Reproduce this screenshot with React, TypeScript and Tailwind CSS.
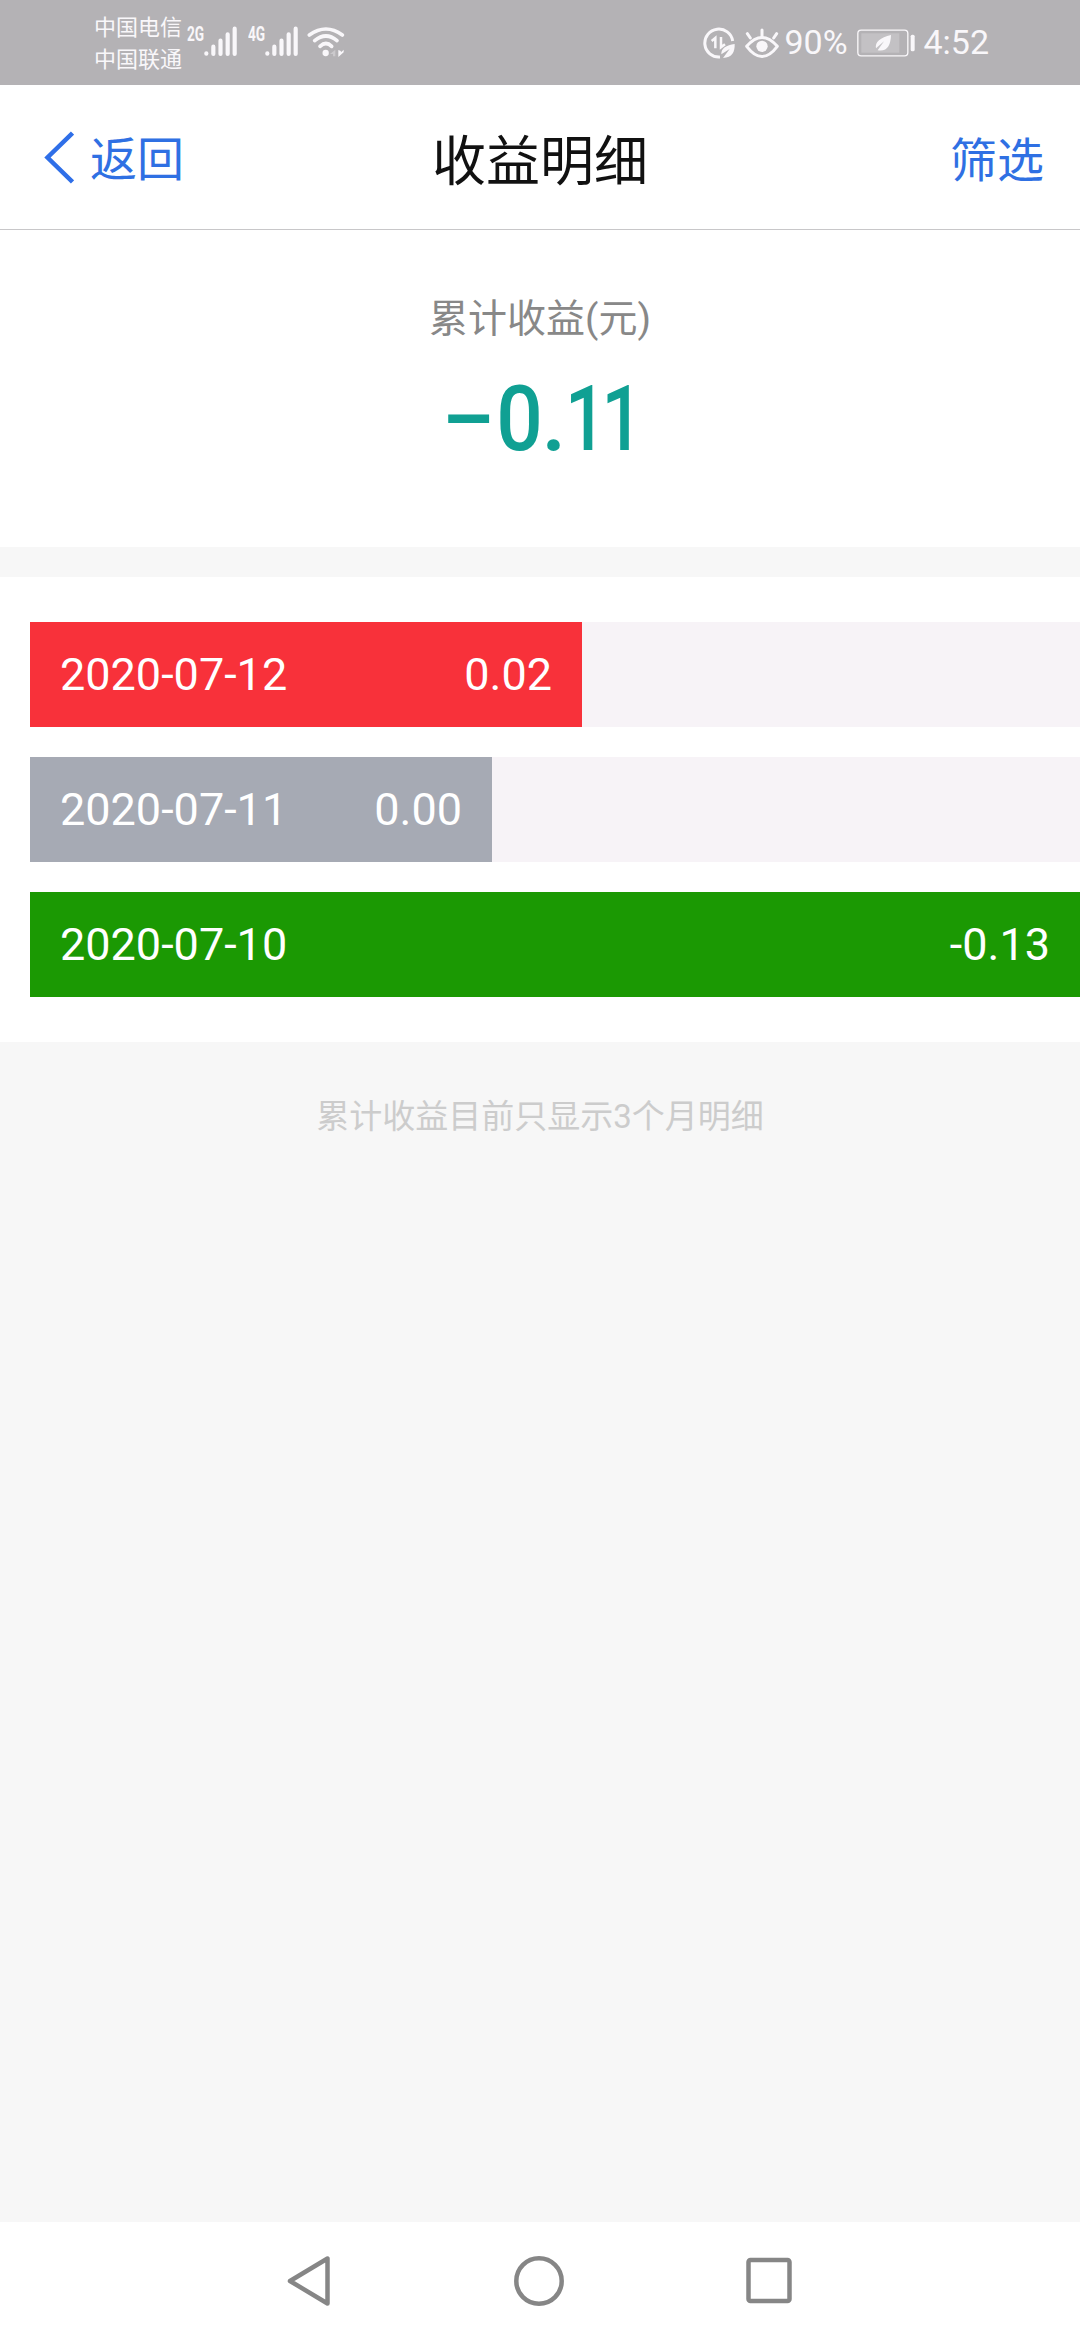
import React from "react";

type Row = { date: string; amount: string; width: string; color: string };

const rows: Row[] = [
  { date: "2020-07-12", amount: "0.02", width: "w-[552px]", color: "bg-[#f8313a]" },
  { date: "2020-07-11", amount: "0.00", width: "w-[462px]", color: "bg-[#a6aab4]" },
  { date: "2020-07-10", amount: "-0.13", width: "w-full", color: "bg-[#1b9903]" },
];

const Signal = () => (
  <svg className="h-[31px] w-[33px] shrink-0" viewBox="0 0 99 93" stroke="#f9f7fa" strokeWidth="12.5" strokeLinecap="round">
    <path d="M7 82v1M28 62v22M49.500 44v40M71 25v59M92 8v76" />
  </svg>
);

const Wifi = () => (
  <svg className="h-[32px] w-[40px] shrink-0" viewBox="0 0 120 96" fill="none">
    <g stroke="#f9f7fa" strokeWidth="11" strokeLinecap="round">
      <path d="M10 27Q60-9 109 27" />
      <path d="M26 44Q60 16 93 44" />
      <path d="M42 61Q60 44 77 61" />
    </g>
    <circle cx="59" cy="81" r="9.500" fill="#f9f7fa" />
    <path d="M72 84 88 71v20h-7v-7z" fill="#cbc9cc" />
    <path d="M97 72l6 2 3 4 7-7v8L97 93z" fill="#f9f7fa" />
  </svg>
);

const DataSaver = () => (
  <svg className="h-[32px] w-[32px] shrink-0" viewBox="0 0 96 96" fill="none">
    <path d="M89 42A42 42 0 1 0 51 90" stroke="#f9f7fa" strokeWidth="9" />
    <path d="M26 42l11-9v31M54 30v31l12-9" stroke="#f9f7fa" strokeWidth="7.500" />
    <path d="M95 51C70 54 54 64 55 82L80 66 60 93C88 92 96 74 95 51z" fill="#f9f7fa" />
  </svg>
);

const Eye = () => (
  <svg className="h-[32px] w-[36px] shrink-0" viewBox="0 0 108 96" fill="none" stroke="#f9f7fa" strokeWidth="9" strokeLinecap="round">
    <path d="M8 58Q54 5 100 58Q54 119 8 58z" strokeLinejoin="round" />
    <circle cx="54" cy="58" r="17" fill="#f9f7fa" stroke="none" />
    <path d="M54 9v20M10 20l9 13M98 20l-9 13" />
  </svg>
);

const Battery = () => (
  <svg className="h-[28px] w-[58px] shrink-0" viewBox="0 0 174 84" fill="none">
    <rect x="2.500" y="3.500" width="150" height="77" rx="10" stroke="#f9f7fa" strokeWidth="4" />
    <rect x="13" y="13" width="114" height="58" fill="#c3c1c4" />
    <path d="M102 18C70 25 53 40 57 58L81 37 62 64C91 69 101 49 102 18z" fill="#f9f7fa" />
    <rect x="161" y="17" width="12" height="50" rx="5" fill="#f9f7fa" />
  </svg>
);

const StatusBar = () => (
  <div className="flex h-[85px] justify-between bg-[#b4b2b5] pl-[94px] pr-[91px] text-[#f9f7fa]">
    <div className="flex">
      <div className="w-[93px] pt-[12px] text-[22px] leading-[32px]">
        <div>中国电信</div>
        <div>中国联通</div>
      </div>
      <div className="flex pt-[26px]">
        <span className="w-[17px] origin-left scale-x-[0.7] font-[Roboto] text-[19.500px] leading-[17px] font-bold">2G</span>
        <Signal />
        <span className="ml-[11px] w-[17px] origin-left scale-x-[0.7] font-[Roboto] text-[19.500px] leading-[17px] font-bold">4G</span>
        <Signal />
        <div className="ml-[8px]">
          <Wifi />
        </div>
      </div>
    </div>
    <div className="flex items-center">
      <DataSaver />
      <div className="ml-[9px]">
        <Eye />
      </div>
      <span className="ml-[4px] w-[71px] text-[34px]">90%</span>
      <div className="ml-[2px] flex">
        <Battery />
      </div>
      <span className="ml-[8px] text-[34px]">4:52</span>
    </div>
  </div>
);

export default function App() {
  return (
    <div className="flex h-[2340px] w-[1080px] flex-col overflow-hidden bg-[#f7f7f7] font-[Roboto,'Noto_Sans_CJK_SC',sans-serif]">
      <StatusBar />
      <header className="grid h-[145px] grid-cols-3 items-center border-b border-[#c8c7c9] bg-white text-[#2f70e3]">
        <button className="flex items-center pl-[44px] text-left text-[47px]">
          <svg className="-mt-[1px] h-[54px] w-[30px]" viewBox="0 0 30 54" fill="none" stroke="#2f6fe8" strokeWidth="4.500">
            <path d="M28.500 3 3.500 27.500 28.500 52" />
          </svg>
          <span className="ml-[16px] pt-[7px]">返回</span>
        </button>
        <h1 className="pt-[10px] text-center text-[54px] text-[#111]">收益明细</h1>
        <button className="pt-[8px] pr-[36px] text-right text-[47px]">筛选</button>
      </header>

      <section className="flex h-[317px] flex-col items-center bg-white pt-[61px]">
        <div className="text-[39px] leading-[56px] text-[#888]">累计收益(元)</div>
        <div className="mt-[26px] flex h-[92px] items-center font-[Roboto] text-[91px] font-medium text-[#10a093]">
          <span className="flex w-[41px] scale-x-[1.08] justify-center pt-[3px]">−</span>
          <span className="ml-[11px] flex w-[39px] scale-x-[0.9] justify-center">0</span>
          <span className="ml-[10px] flex w-[11px] justify-center">.</span>
          <span className="ml-[5px] w-[68px] origin-left scale-x-[0.8] tracking-[-6px]">11</span>
        </div>
      </section>

      <section className="mt-[30px] flex h-[465px] flex-col gap-[30px] bg-white pt-[45px] pl-[30px]">
        {rows.map((row) => (
          <div key={row.date} className="h-[105px] bg-[#f7f3f7]">
            <div className={`${row.width} ${row.color} flex h-full items-center justify-between px-[30px] text-[45px] text-white`}>
              <span>{row.date}</span>
              <span>{row.amount}</span>
            </div>
          </div>
        ))}
      </section>

      <p className="mt-[51px] text-center text-[33px] leading-[48px] text-[#ccc]">累计收益目前只显示3个月明细</p>

      <nav className="mt-auto flex h-[118px] items-center justify-between bg-white pr-[286px] pl-[285px]">
        <svg className="h-[54px] w-[48px]" viewBox="0 0 48 54" fill="none" stroke="#868686" strokeWidth="4.500" strokeLinejoin="round">
          <path d="M5 27 42.500 4.500v45z" />
        </svg>
        <svg className="h-[54px] w-[54px]" viewBox="0 0 54 54" fill="none" stroke="#868686" strokeWidth="4.500">
          <circle cx="27" cy="27" r="22.700" />
        </svg>
        <svg className="h-[54px] w-[50px]" viewBox="0 0 50 54" fill="none" stroke="#868686" strokeWidth="4.500">
          <rect x="4.500" y="6" width="41" height="41" rx="2" />
        </svg>
      </nav>
    </div>
  );
}
